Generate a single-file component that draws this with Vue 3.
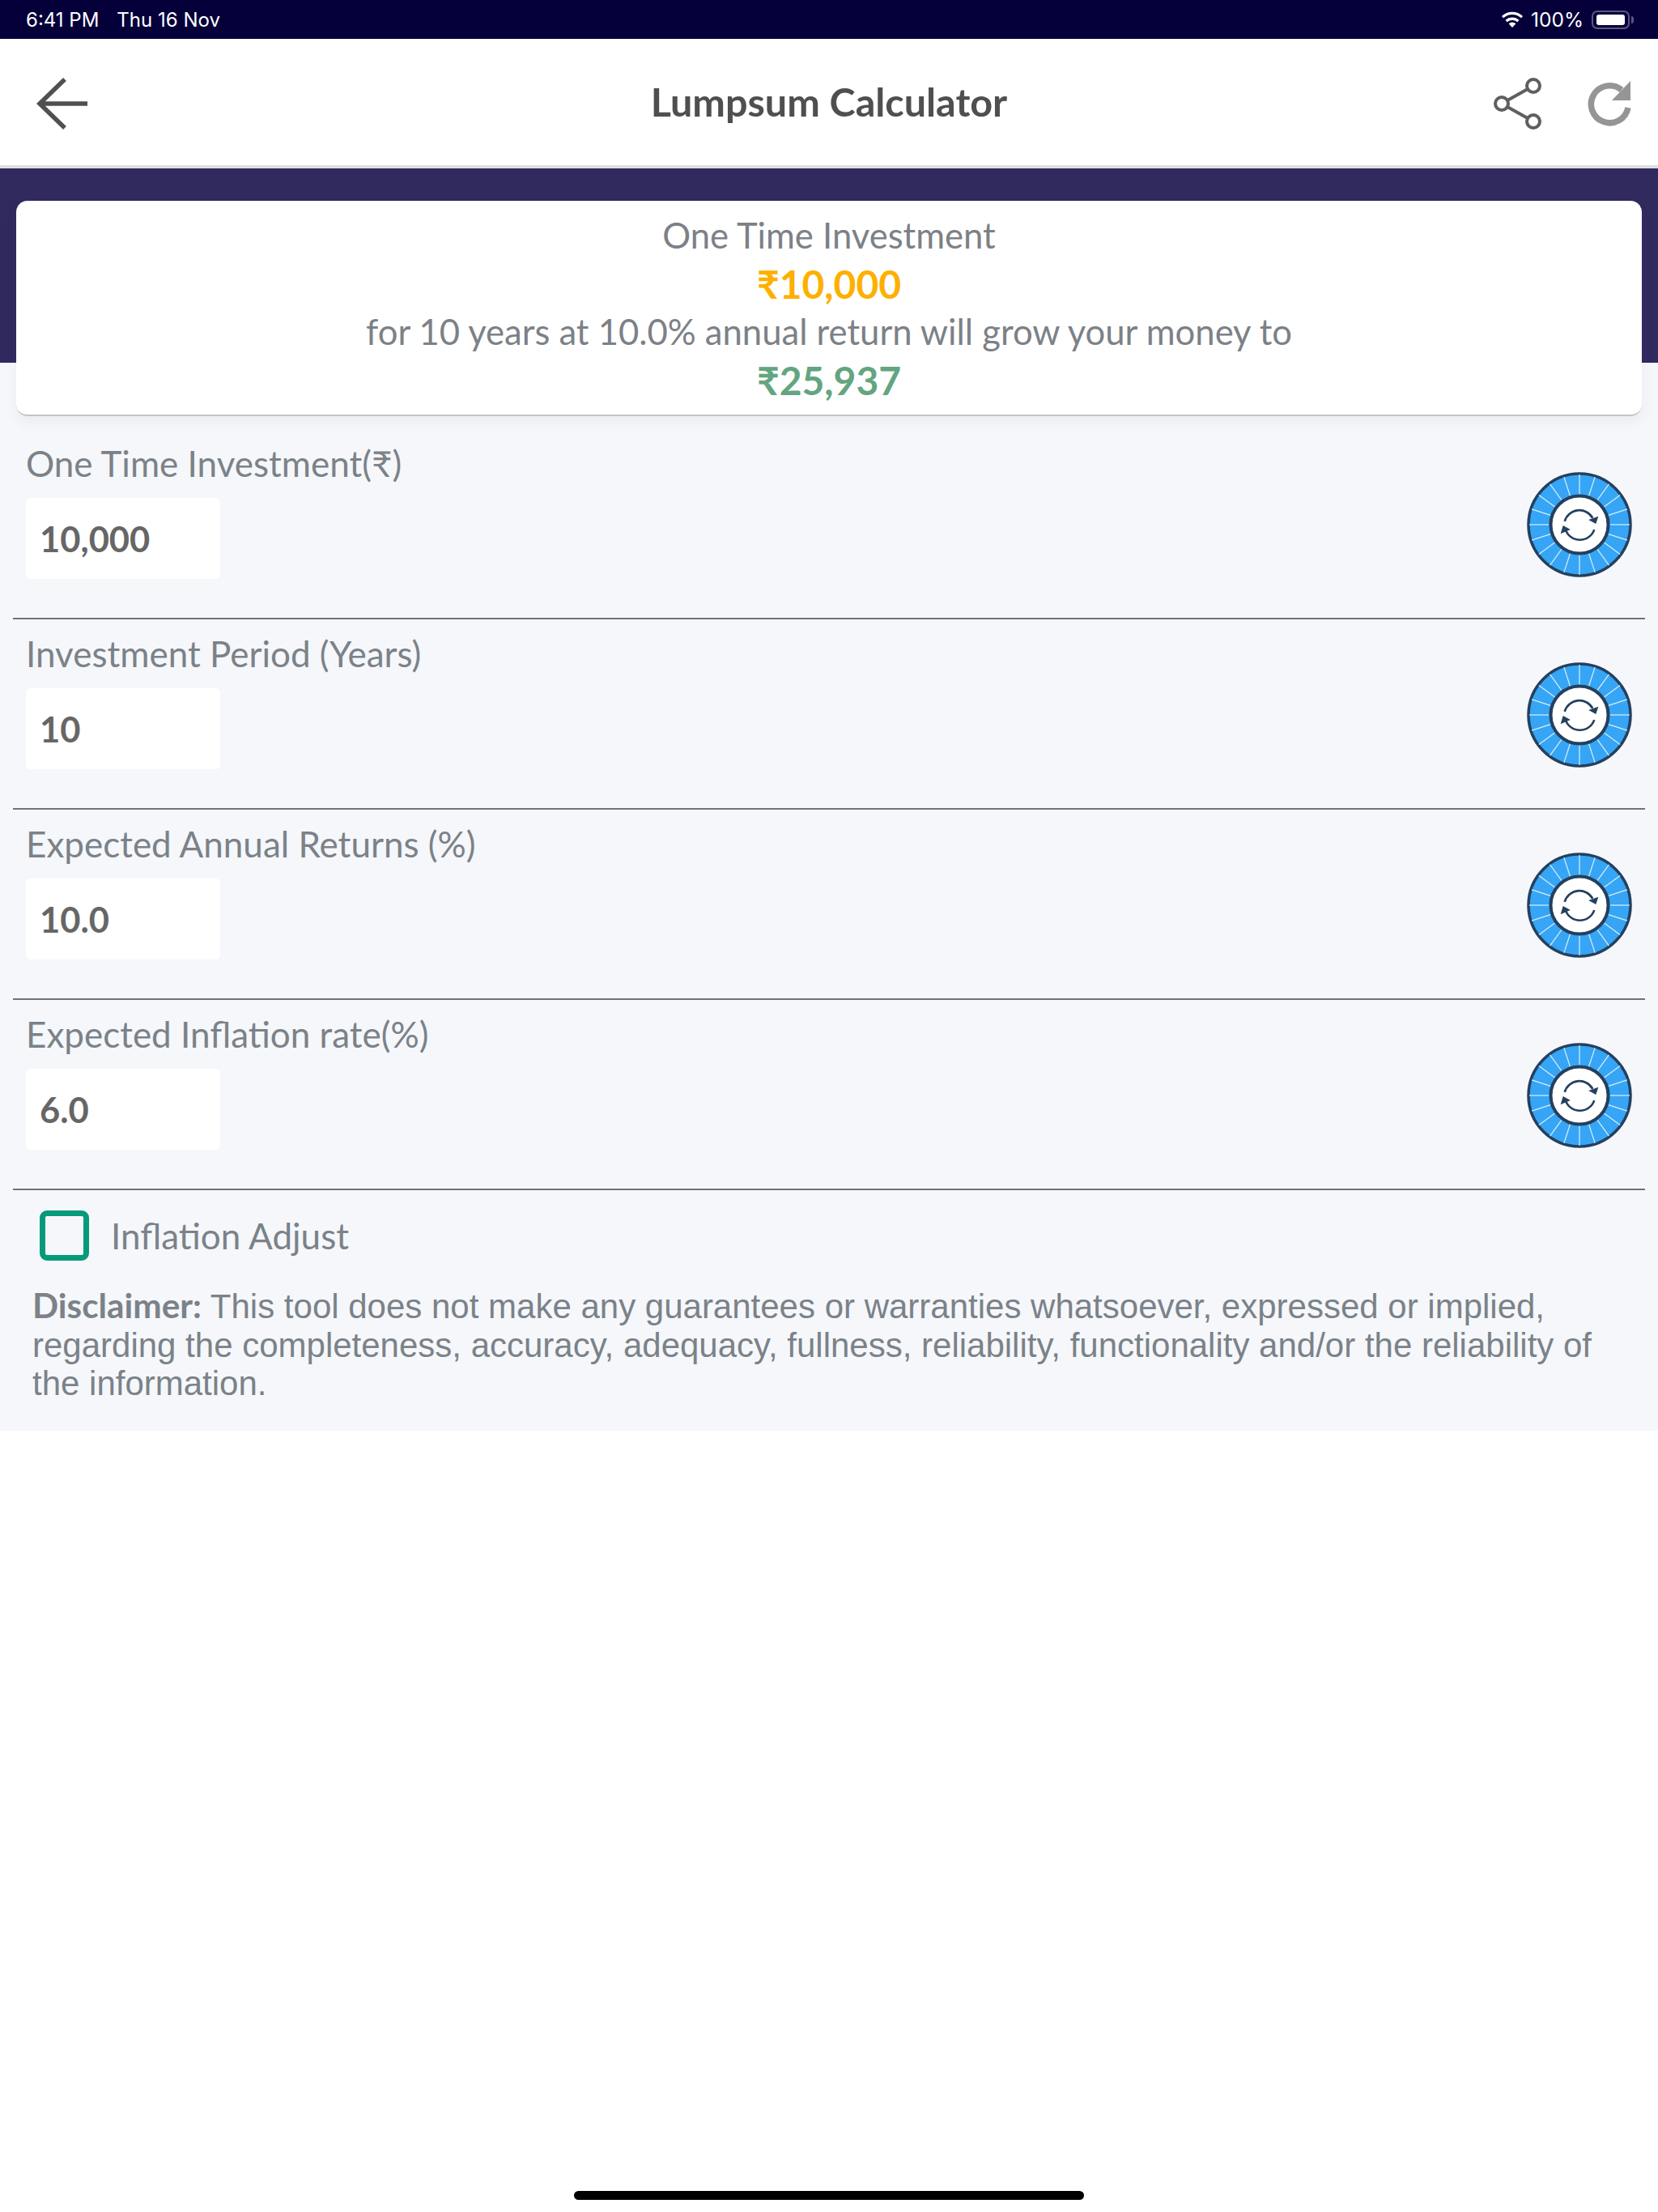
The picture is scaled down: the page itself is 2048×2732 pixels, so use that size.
<script setup>
import { ref } from 'vue';

const rows = [
  { label: 'One Time Investment(₹)', value: '10,000' },
  { label: 'Investment Period (Years)', value: '10' },
  { label: 'Expected Annual Returns (%)', value: '10.0' },
  { label: 'Expected Inflation rate(%)', value: '6.0' }
];

const inflationAdjust = ref(false);

// white spokes on the blue dial
const ticks = Array.from({ length: 20 }, (_, i) => {
  const a = (i * 18 * Math.PI) / 180;
  return {
    x1: 64 + Math.sin(a) * 37,
    y1: 64 - Math.cos(a) * 37,
    x2: 64 + Math.sin(a) * 61,
    y2: 64 - Math.cos(a) * 61
  };
});
</script>

<template>
  <div class="page">
    <div class="status-bar">
      <div class="status-left">
        <span>6:41 PM</span>
        <span>Thu 16 Nov</span>
      </div>
      <div class="status-right">
        <svg class="wifi" width="28" height="20" viewBox="0 0 28 20">
          <path d="M14 20 9.6 15.2a6.4 6.4 0 0 1 8.8 0Z" fill="#fff" />
          <path d="M6.6 12a10.8 10.8 0 0 1 14.8 0M2 7.2a17.6 17.6 0 0 1 24 0" fill="none" stroke="#fff" stroke-width="3.2" />
        </svg>
        <span>100%</span>
        <div class="battery"><div class="battery-fill"></div></div>
        <div class="battery-nub"></div>
      </div>
    </div>

    <header class="top-bar">
      <button class="icon-btn back">
        <svg width="64" height="64" viewBox="0 0 64 64">
          <path d="M63 32H4M35 2 4 32l31 30" fill="none" stroke="#505050" stroke-width="5.5" />
        </svg>
      </button>
      <h1>Lumpsum Calculator</h1>
      <div class="actions">
        <svg width="60" height="64" viewBox="0 0 60 64">
          <circle cx="49" cy="10" r="8" fill="none" stroke="#5f5f5f" stroke-width="4" />
          <circle cx="10" cy="32" r="8" fill="none" stroke="#5f5f5f" stroke-width="4" />
          <circle cx="49" cy="54" r="8" fill="none" stroke="#5f5f5f" stroke-width="4" />
          <path d="M17 28 42 14M17 36l25 14" stroke="#5f5f5f" stroke-width="4" />
        </svg>
        <svg width="56" height="58" viewBox="0 0 56 58">
          <path d="M51 34A23 23 0 1 1 43 12" fill="none" stroke="#959595" stroke-width="7.5" />
          <path d="M54 1V25H31Z" fill="#959595" />
        </svg>
      </div>
    </header>

    <main class="content">
      <section class="summary-wrap">
        <div class="summary">
          <p>One Time Investment</p>
          <p class="amount invested">₹10,000</p>
          <p>for 10 years at 10.0% annual return will grow your money to</p>
          <p class="amount grown">₹25,937</p>
        </div>
      </section>

      <div class="rows">
        <div v-for="row in rows" :key="row.label" class="row">
          <div class="field">
            <label>{{ row.label }}</label>
            <div class="input">{{ row.value }}</div>
          </div>
          <svg class="dial" width="130" height="130" viewBox="0 0 128 128">
            <circle cx="64" cy="64" r="62" fill="#36a5f5" stroke="#24405f" stroke-width="3.5" />
            <line v-for="(t, i) in ticks" :key="i" :x1="t.x1" :y1="t.y1" :x2="t.x2" :y2="t.y2" stroke="#d8eefc" stroke-width="1.2" />
            <circle cx="64" cy="64" r="35" fill="#fff" stroke="#24405f" stroke-width="4" />
            <path d="M46 60A18.5 18.5 0 0 1 80 56M82 70A18.5 18.5 0 0 1 47 70" fill="none" stroke="#24405f" stroke-width="2.6" />
            <path d="M87 54 84 63 75 58ZM41 75 44 65 53 70Z" fill="#24405f" />
          </svg>
        </div>
      </div>

      <div class="adjust" @click="inflationAdjust = !inflationAdjust">
        <span class="checkbox"></span>
        <span>Inflation Adjust</span>
      </div>

      <p class="disclaimer">
        <b>Disclaimer:</b> This tool does not make any guarantees or warranties whatsoever, expressed or implied, regarding the completeness, accuracy, adequacy, fullness, reliability, functionality and/or the reliability of the information.
      </p>
    </main>

    <div class="home-indicator"></div>
  </div>
</template>

<style>
body {
  background: #fff;
}
</style>

<style scoped>
* {
  margin: 0;
  padding: 0;
  box-sizing: border-box;
}

.page {
  width: 2048px;
  height: 2732px;
  display: flex;
  flex-direction: column;
  font-family: Lato, "Noto Sans", sans-serif;
  background: #fff;
}

.status-bar {
  height: 48px;
  flex-shrink: 0;
  background: #05003a;
  color: #fff;
  font-family: Inter, sans-serif;
  font-size: 24.5px;
  display: flex;
  justify-content: space-between;
  align-items: center;
  padding: 0 30px 0 32px;
}

.status-left {
  display: flex;
  gap: 22px;
  font-size: 24px;
}

.status-right {
  display: flex;
  align-items: center;
}

.wifi {
  margin-right: 9px;
}

.battery {
  width: 47px;
  height: 23px;
  margin-left: 10px;
  padding: 3px 4px;
  border: 2px solid #5c5884;
  border-radius: 7px;
}

.battery-fill {
  width: 100%;
  height: 100%;
  background: #fff;
  border-radius: 3px;
}

.battery-nub {
  width: 3px;
  height: 9px;
  margin-left: 2px;
  background: #5c5884;
  border-radius: 0 3px 3px 0;
}

.top-bar {
  height: 160px;
  flex-shrink: 0;
  border-bottom: 4px solid #e0e0e0;
  background: #fff;
  display: grid;
  grid-template-columns: 1fr auto 1fr;
  align-items: center;
  padding: 4px 32px 0;
}

.icon-btn {
  background: none;
  border: 0;
  display: flex;
  margin-left: 13px;
}

.top-bar h1 {
  text-align: center;
  font-size: 48.5px;
  font-weight: 700;
  color: #4f4f4f;
  margin-bottom: 6px;
}

.actions {
  display: flex;
  align-items: center;
  justify-content: flex-end;
  gap: 55px;
}

.content {
  background: #f5f7fb;
  height: 1559px;
  flex-shrink: 0;
}

.summary-wrap {
  background: linear-gradient(#312a5f 240px, transparent 240px);
  padding: 40px 20px 0;
}

.summary {
  height: 266px;
  background: #fff;
  border-bottom: 2px solid #c4c4c4;
  border-radius: 14px;
  box-shadow: 0 8px 16px rgba(60, 60, 90, 0.06);
  padding-top: 13px;
  text-align: center;
  font-size: 43.6px;
  line-height: 59.5px;
  color: #7c8187;
}

.amount {
  font-size: 48px;
  font-weight: 700;
}

.invested {
  color: #fdb000;
}

.grown {
  color: #63a580;
}

.rows {
  padding: 16px 16px 0;
}

.row {
  height: 235px;
  border-bottom: 2px solid #707276;
  display: flex;
  align-items: flex-start;
  justify-content: space-between;
  padding: 15px 16px 0;
}

.field {
  display: flex;
  flex-direction: column;
}

.field label {
  font-size: 44px;
  line-height: 54px;
  color: #7b8288;
}

.input {
  width: 240px;
  height: 100px;
  margin-top: 16px;
  padding-left: 17px;
  background: #fff;
  border-radius: 6px;
  font-size: 43.5px;
  font-weight: 700;
  line-height: 100px;
  color: #666;
}

.dial {
  margin-top: 38px;
}

.adjust {
  display: flex;
  align-items: center;
  gap: 27px;
  padding: 25px 0 0 49px;
  font-size: 44px;
  color: #7b8288;
}

.checkbox {
  width: 61px;
  height: 62px;
  border: 7px solid #079a7a;
  border-radius: 9px;
}

.disclaimer {
  padding: 31px 40px 0 40px;
  font-family: "Liberation Sans", Arial, sans-serif;
  font-size: 42px;
  line-height: 47.5px;
  color: #7b8288;
}

.disclaimer b {
  font-family: Lato, sans-serif;
  font-size: 42.3px;
}

.home-indicator {
  width: 630px;
  height: 11px;
  margin: auto auto 15px;
  background: #000;
  border-radius: 6px;
}
</style>
